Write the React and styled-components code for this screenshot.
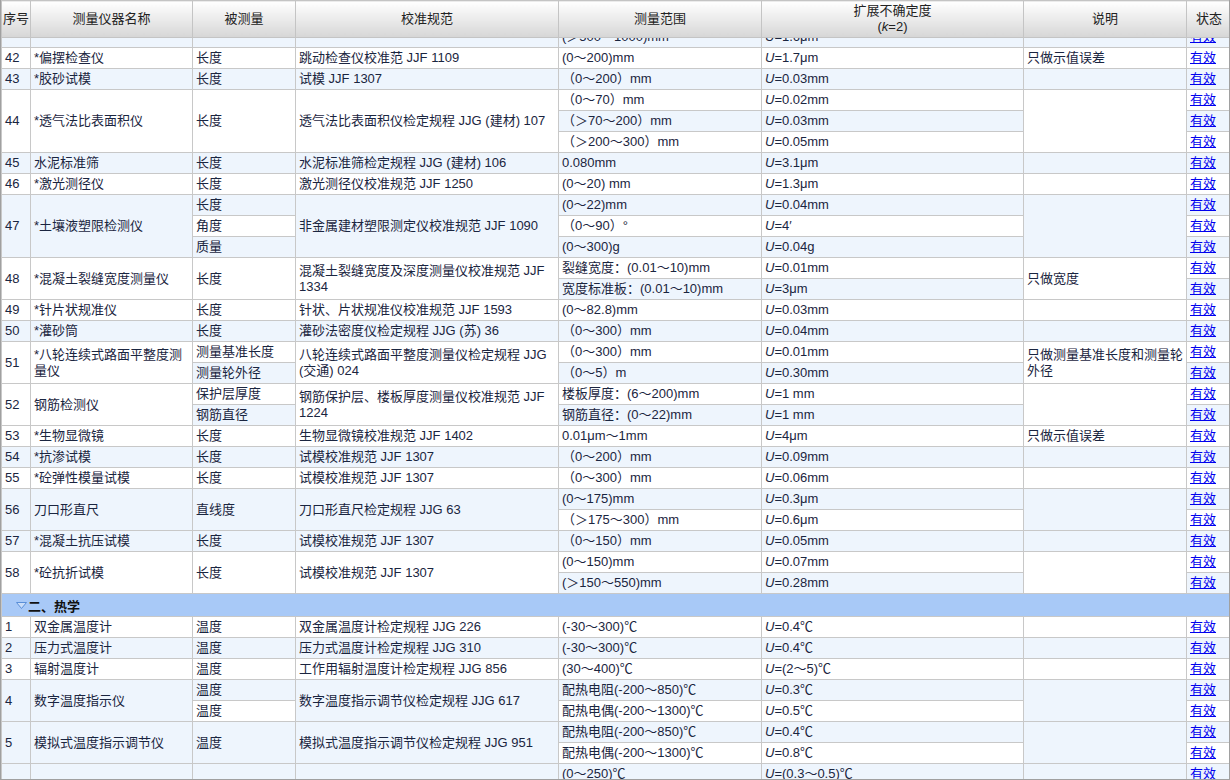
import React from 'react';
import styled, { createGlobalStyle } from 'styled-components';

const GlobalStyle = createGlobalStyle`
  html, body { margin: 0; padding: 0; background: #fff; overflow: hidden; }
  body { font-family: "Liberation Sans", "Noto Sans CJK SC", sans-serif; }
`;

const BLUE = '#eef5fd';

// 每个仪器：subs 为子行（范围/不确定度/被测量）
const MECH = [
  { no: '42', name: '*偏摆检查仪', spec: '跳动检查仪校准范 JJF 1109', note: '只做示值误差', qty: '长度', subs: [['(0～200)mm', '1.7μm']] },
  { no: '43', name: '*胶砂试模', spec: '试模 JJF 1307', qty: '长度', subs: [['（0～200）mm', '0.03mm']] },
  { no: '44', name: '*透气法比表面积仪', spec: '透气法比表面积仪检定规程 JJG (建材) 107', qty: '长度', subs: [['（0～70）mm', '0.02mm'], ['（＞70～200）mm', '0.03mm'], ['（＞200～300）mm', '0.05mm']] },
  { no: '45', name: '水泥标准筛', spec: '水泥标准筛检定规程 JJG (建材) 106', qty: '长度', subs: [['0.080mm', '3.1μm']] },
  { no: '46', name: '*激光测径仪', spec: '激光测径仪校准规范 JJF 1250', qty: '长度', subs: [['(0～20) mm', '1.3μm']] },
  { no: '47', name: '*土壤液塑限检测仪', spec: '非金属建材塑限测定仪校准规范 JJF 1090', subs: [['(0～22)mm', '0.04mm', '长度'], ['（0～90）°', '4′', '角度'], ['(0～300)g', '0.04g', '质量']] },
  { no: '48', name: '*混凝土裂缝宽度测量仪', spec: '混凝土裂缝宽度及深度测量仪校准规范 JJF 1334', note: '只做宽度', qty: '长度', subs: [['裂缝宽度：(0.01～10)mm', '0.01mm'], ['宽度标准板：(0.01～10)mm', '3μm']] },
  { no: '49', name: '*针片状规准仪', spec: '针状、片状规准仪校准规范 JJF 1593', qty: '长度', subs: [['(0～82.8)mm', '0.03mm']] },
  { no: '50', name: '*灌砂筒', spec: '灌砂法密度仪检定规程 JJG (苏) 36', qty: '长度', subs: [['（0～300）mm', '0.04mm']] },
  { no: '51', name: '*八轮连续式路面平整度测量仪', spec: '八轮连续式路面平整度测量仪检定规程 JJG (交通) 024', note: '只做测量基准长度和测量轮外径', subs: [['（0～300）mm', '0.01mm', '测量基准长度'], ['（0～5）m', '0.30mm', '测量轮外径']] },
  { no: '52', name: '钢筋检测仪', spec: '钢筋保护层、楼板厚度测量仪校准规范 JJF 1224', subs: [['楼板厚度：(6～200)mm', '1 mm', '保护层厚度'], ['钢筋直径：(0～22)mm', '1 mm', '钢筋直径']] },
  { no: '53', name: '*生物显微镜', spec: '生物显微镜校准规范 JJF 1402', note: '只做示值误差', qty: '长度', subs: [['0.01μm～1mm', '4μm']] },
  { no: '54', name: '*抗渗试模', spec: '试模校准规范 JJF 1307', qty: '长度', subs: [['（0～200）mm', '0.09mm']] },
  { no: '55', name: '*砼弹性模量试模', spec: '试模校准规范 JJF 1307', qty: '长度', subs: [['（0～300）mm', '0.06mm']] },
  { no: '56', name: '刀口形直尺', spec: '刀口形直尺检定规程 JJG 63', qty: '直线度', subs: [['(0～175)mm', '0.3μm'], ['（＞175～300）mm', '0.6μm']] },
  { no: '57', name: '*混凝土抗压试模', spec: '试模校准规范 JJF 1307', qty: '长度', subs: [['（0～150）mm', '0.05mm']] },
  { no: '58', name: '*砼抗折试模', spec: '试模校准规范 JJF 1307', qty: '长度', subs: [['(0～150)mm', '0.07mm'], ['(＞150～550)mm', '0.28mm']] },
];

const HEAT = [
  { no: '1', name: '双金属温度计', spec: '双金属温度计检定规程 JJG 226', qty: '温度', subs: [['(-30～300)℃', '0.4℃']] },
  { no: '2', name: '压力式温度计', spec: '压力式温度计检定规程 JJG 310', qty: '温度', subs: [['(-30～300)℃', '0.4℃']] },
  { no: '3', name: '辐射温度计', spec: '工作用辐射温度计检定规程 JJG 856', qty: '温度', subs: [['(30～400)℃', '(2～5)℃']] },
  { no: '4', name: '数字温度指示仪', spec: '数字温度指示调节仪检定规程 JJG 617', subs: [['配热电阻(-200～850)℃', '0.3℃', '温度'], ['配热电偶(-200～1300)℃', '0.5℃', '温度']] },
  { no: '5', name: '模拟式温度指示调节仪', spec: '模拟式温度指示调节仪检定规程 JJG 951', qty: '温度', subs: [['配热电阻(-200～850)℃', '0.4℃'], ['配热电偶(-200～1300)℃', '0.8℃']] },
  { no: '6', name: '', spec: '', qty: '', subs: [['(0～250)℃', '(0.3～0.5)℃', '温度'], ['', '', '']] },
];

const Page = styled.div`
  width: 1230px;
  height: 780px;
  overflow: hidden;
  box-sizing: border-box;
  border: 1px solid #a0a0a0;
  border-top: none;
`;

const Table = styled.table`
  width: 100%;
  border-collapse: collapse;
  table-layout: fixed;
  font-size: 13px;
  color: #1a2540;
`;

const Th = styled.th`
  height: 36px;
  padding: 0;
  font-weight: normal;
  font-size: 13px;
  line-height: 16px;
  color: #222;
  white-space: nowrap;
  border: 1px solid #c4c4c4;
  background: linear-gradient(#ffffff, #d6d6d6);
  i { font-style: italic; }
`;

const Td = styled.td`
  height: ${p => p.$h ?? 20}px;
  padding: 0 3px;
  line-height: 16px;
  border: 1px solid #c8c8c8;
  background: ${p => (p.$blue ? BLUE : '#fff')};
  vertical-align: middle;
  white-space: normal;
  word-break: break-all;
`;

const Clip = styled.div`
  height: 9px;
  overflow: hidden;
  display: flex;
  align-items: flex-end;
  line-height: 20px;
  white-space: nowrap;
`;

const Link = styled.a`
  color: #0000ee;
  text-decoration: underline;
  cursor: pointer;
`;

const GroupCell = styled.td`
  height: 22px;
  padding: 0 0 0 14px;
  background: #a8c9f7;
  border: 1px solid #c8c8c8;
  font-weight: bold;
  color: #111;
`;

const Tri = styled.svg`
  vertical-align: 2px;
  margin-right: 1px;
`;

const U = ({ v }) => (v ? <><i>U</i>={v}</> : null);

function renderItems(items, startIdx) {
  const rows = [];
  let idx = startIdx;
  items.forEach(it => {
    const n = it.subs.length;
    const first = idx % 2 === 0;
    it.subs.forEach((s, k) => {
      const blue = idx % 2 === 0;
      rows.push(
        <tr key={`${it.no}-${k}`}>
          {k === 0 && <Td rowSpan={n} $blue={first}>{it.no}</Td>}
          {k === 0 && <Td rowSpan={n} $blue={first}>{it.name}</Td>}
          {it.qty !== undefined
            ? k === 0 && <Td rowSpan={n} $blue={first}>{it.qty}</Td>
            : <Td $blue={blue}>{s[2]}</Td>}
          {k === 0 && <Td rowSpan={n} $blue={first}>{it.spec}</Td>}
          <Td $blue={blue}>{s[0]}</Td>
          <Td $blue={blue}><U v={s[1]} /></Td>
          {k === 0 && <Td rowSpan={n} $blue={first}>{it.note}</Td>}
          <Td $blue={blue}>{s[0] && <Link>有效</Link>}</Td>
        </tr>
      );
      idx += 1;
    });
  });
  return rows;
}

export default function App() {
  return (
    <Page>
      <GlobalStyle />
      <Table>
        <colgroup>
          <col style={{ width: 29 }} />
          <col style={{ width: 162 }} />
          <col style={{ width: 103 }} />
          <col style={{ width: 263 }} />
          <col style={{ width: 203 }} />
          <col style={{ width: 262 }} />
          <col style={{ width: 163 }} />
          <col style={{ width: 45 }} />
        </colgroup>
        <thead>
          <tr>
            <Th>序号</Th>
            <Th>测量仪器名称</Th>
            <Th>被测量</Th>
            <Th>校准规范</Th>
            <Th>测量范围</Th>
            <Th>扩展不确定度<br />(<i>k</i>=2)</Th>
            <Th>说明</Th>
            <Th>状态</Th>
          </tr>
        </thead>
        <tbody>
          <tr>
            <Td $blue $h={9}><Clip /></Td>
            <Td $blue $h={9}><Clip /></Td>
            <Td $blue $h={9}><Clip /></Td>
            <Td $blue $h={9}><Clip /></Td>
            <Td $blue $h={9}><Clip>(＞500～1000)mm</Clip></Td>
            <Td $blue $h={9}><Clip><U v="1.6μm" /></Clip></Td>
            <Td $blue $h={9}><Clip /></Td>
            <Td $blue $h={9}><Clip><Link>有效</Link></Clip></Td>
          </tr>
          {renderItems(MECH, 1)}
          <tr>
            <GroupCell colSpan={8}>
              <Tri width="11" height="7" viewBox="0 0 11 7">
                <path d="M0.5 0.5 H10.5 L5.5 6.5 Z" fill="#c9ddf8" stroke="#5a8fd8" />
              </Tri>
              二、热学
            </GroupCell>
          </tr>
          {renderItems(HEAT, 1)}
        </tbody>
      </Table>
    </Page>
  );
}
